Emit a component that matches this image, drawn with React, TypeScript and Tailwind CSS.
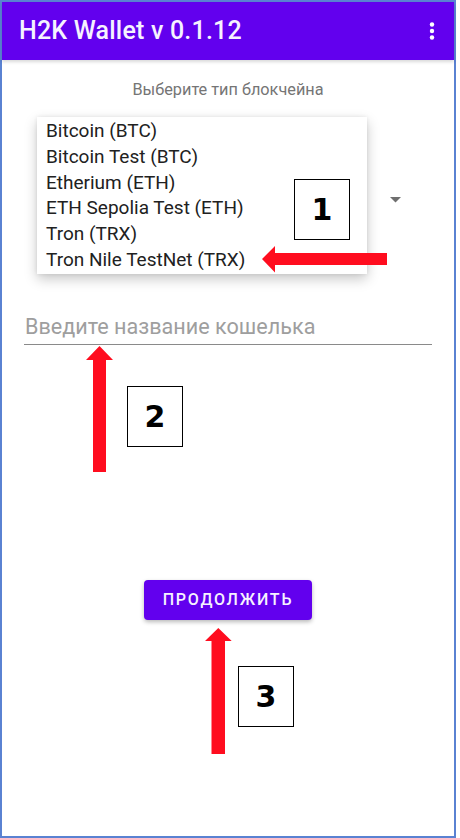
import React from 'react';

const chains = [
  'Bitcoin (BTC)',
  'Bitcoin Test (BTC)',
  'Etherium (ETH)',
  'ETH Sepolia Test (ETH)',
  'Tron (TRX)',
  'Tron Nile TestNet (TRX)',
];

const StepBox: React.FC<{ n: string; className: string }> = ({ n, className }) => (
  <div
    className={`absolute flex items-center justify-center bg-white border-[1.5px] border-black text-[30px] font-bold text-black ${className}`}
    style={{ fontFamily: '"DejaVu Sans", sans-serif' }}
  >
    {n}
  </div>
);

const App: React.FC = () => {
  return (
    <div className="relative w-[460px] h-[838px] bg-white" style={{ fontFamily: 'Roboto, "Noto Sans", sans-serif' }}>
      <div className="w-[456px] h-[838px] border-2 border-[#5a82d2] flex flex-col">
        {/* app bar */}
        <header className="h-[58px] bg-[#6200ee] flex items-center justify-between pl-[17px] pr-[16px] shadow-[0_2px_3px_rgba(0,0,0,0.15)]">
          <h1 className="text-[#f6f2ff] text-[25px] font-medium tracking-[0.2px]">H2K Wallet v 0.1.12</h1>
          <svg width="8" height="22" viewBox="0 0 8 22" className="mr-[2px]">
            <circle cx="4" cy="4.5" r="2.2" fill="#fff" />
            <circle cx="4" cy="11" r="2.2" fill="#fff" />
            <circle cx="4" cy="17.5" r="2.2" fill="#fff" />
          </svg>
        </header>

        <div className="flex flex-col px-[22px]">
          <p className="mt-[20px] h-[20px] leading-[20px] text-center text-[16.3px] text-[#757575]">
            Выберите тип блокчейна
          </p>

          {/* spinner */}
          <div className="mt-[76px] h-[48px] flex items-center justify-end pr-[31px]">
            <svg width="11" height="6" viewBox="0 0 11 6">
              <polygon points="0,0 11,0 5.5,5.5" fill="#6f6f6f" />
            </svg>
          </div>

          {/* wallet name */}
          <div className="mt-[89px] border-b border-[#8a8a8a] pb-[3px]">
            <div className="h-[28px] leading-[28px] text-[21.6px] text-[#9e9e9e] pl-[1px]">
              Введите название кошелька
            </div>
          </div>

          <div className="mt-[235px] flex justify-center">
            <button className="w-[168px] h-[40px] rounded-[4px] bg-[#6200ee] text-[#f6f2ff] text-[16px] font-medium tracking-[1.8px] shadow-[0_2px_4px_rgba(0,0,0,0.28)]">
              ПРОДОЛЖИТЬ
            </button>
          </div>
        </div>
      </div>

      {/* open dropdown menu */}
      <ul className="absolute left-[37px] top-[117px] w-[330px] bg-white py-[1px] shadow-[0_5px_12px_rgba(0,0,0,0.22),0_0_4px_rgba(0,0,0,0.08)]">
        {chains.map((c) => (
          <li key={c} className="h-[25.8px] leading-[25.8px] pl-[9px] text-[19px] text-[#212121]">
            {c}
          </li>
        ))}
      </ul>

      {/* annotations */}
      <svg className="absolute left-0 top-0 pointer-events-none" width="460" height="838" viewBox="0 0 460 838">
        <polygon points="262,259 275,246 275,253 387,253 387,265 275,265 275,272.5" fill="#ff0d1f" />
        <polygon points="99.5,346 113,360 106,360 106,472 93,472 93,360 86,360" fill="#ff0d1f" />
        <polygon points="218.3,628 231.7,641 225,641 225,754 211.5,754 211.5,641 205,641" fill="#ff0d1f" />
      </svg>
      <StepBox n="1" className="left-[294px] top-[179px] w-[56px] h-[61px]" />
      <StepBox n="2" className="left-[127px] top-[386px] w-[56px] h-[61px]" />
      <StepBox n="3" className="left-[238px] top-[666px] w-[56px] h-[61px]" />
    </div>
  );
};

export default App;
